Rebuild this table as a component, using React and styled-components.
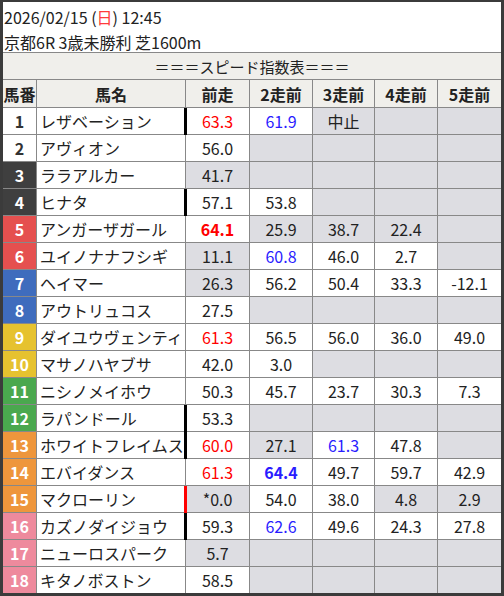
import React from "react";
import styled, { createGlobalStyle } from "styled-components";

const GlobalStyle = createGlobalStyle`
  * {
    box-sizing: border-box;
    padding: 0;
    margin: 0;
  }
  body {
    font-family: "Noto Sans CJK JP", "Noto Sans", sans-serif;
    background: #fff;
    color: #222;
  }
`;

const COLS = "34px 149px 64px 63px 62px 63px 63px";

const WAKU = {
  1: { bg: "#ffffff", fg: "#333333" },
  2: { bg: "#3f3f3f", fg: "#ffffff" },
  3: { bg: "#e5504f", fg: "#ffffff" },
  4: { bg: "#3f6cbd", fg: "#ffffff" },
  5: { bg: "#e6c22f", fg: "#ffffff" },
  6: { bg: "#4aa84e", fg: "#ffffff" },
  7: { bg: "#ee963c", fg: "#ffffff" },
  8: { bg: "#ee8a9d", fg: "#ffffff" },
};

const TEXT = { red: "#ff0000", blue: "#2a1cff" };

const Frame = styled.div`
  width: 504px;
  height: 596px;
  border: 3px solid #3b3b3b;
  border-top-width: 2px;
  background: #fff;
  overflow: hidden;
`;

const Info = styled.div`
  height: 51px;
  padding: 3px 0 0 1px;
  border-bottom: 1px solid #888;
  font-size: 16px;
  line-height: 25px;
  color: #222;
`;

const Sun = styled.span`
  color: #ff3b3b;
`;

const Title = styled.div`
  height: 27px;
  display: flex;
  align-items: center;
  justify-content: center;
  background: #f0efeb;
  border-bottom: 1px solid #888;
  font-size: 15px;
  color: #222;
`;

const Row = styled.div`
  display: grid;
  grid-template-columns: ${COLS};
  height: ${(p) => p.$h || 27}px;
`;

const Cell = styled.div`
  position: relative;
  display: flex;
  align-items: center;
  justify-content: center;
  border-right: 1px solid #888;
  border-bottom: ${(p) => (p.$last ? "none" : "1px solid #888")};
  font-size: 16px;
  &:last-child {
    border-right: none;
  }
`;

const HeadCell = styled(Cell)`
  background: #f0efeb;
  font-weight: 700;
  color: #222;
`;

const NumCell = styled(Cell)`
  background: ${(p) => p.$bg};
  color: ${(p) => p.$fg};
  font-weight: 700;
`;

const NameCell = styled(Cell)`
  justify-content: flex-start;
  padding-left: 3px;
  background: #fff;
  white-space: nowrap;
`;

const ValueCell = styled(Cell)`
  background: ${(p) => (p.$gray ? "#dddde2" : "#ffffff")};
  color: ${(p) => (p.$color ? TEXT[p.$color] : "#222")};
  font-weight: ${(p) => (p.$bold ? 700 : 400)};
  &::before {
    content: "";
    display: ${(p) => (p.$bar ? "block" : "none")};
    position: absolute;
    left: -2px;
    top: 0;
    bottom: -1px;
    width: 3px;
    background: ${(p) => (p.$bar === "red" ? "#ff0000" : "#000")};
  }
`;

const horses = [
  { no: 1, w: 1, name: "レザベーション", runs: [{ v: "63.3", c: "red", bar: "black" }, { v: "61.9", c: "blue" }, { v: "中止", g: 1 }, null, null] },
  { no: 2, w: 1, name: "アヴィオン", runs: [{ v: "56.0" }, null, null, null, null] },
  { no: 3, w: 2, name: "ララアルカー", runs: [{ v: "41.7", g: 1 }, null, null, null, null] },
  { no: 4, w: 2, name: "ヒナタ", runs: [{ v: "57.1", bar: "black" }, { v: "53.8" }, null, null, null] },
  { no: 5, w: 3, name: "アンガーザガール", runs: [{ v: "64.1", c: "red", b: 1 }, { v: "25.9", g: 1 }, { v: "38.7", g: 1 }, { v: "22.4", g: 1 }, null] },
  { no: 6, w: 3, name: "ユイノナナフシギ", runs: [{ v: "11.1", g: 1 }, { v: "60.8", c: "blue" }, { v: "46.0" }, { v: "2.7" }, null] },
  { no: 7, w: 4, name: "ヘイマー", runs: [{ v: "26.3", g: 1 }, { v: "56.2" }, { v: "50.4" }, { v: "33.3" }, { v: "-12.1" }] },
  { no: 8, w: 4, name: "アウトリュコス", runs: [{ v: "27.5" }, null, null, null, null] },
  { no: 9, w: 5, name: "ダイユウヴェンティ", runs: [{ v: "61.3", c: "red" }, { v: "56.5" }, { v: "56.0" }, { v: "36.0" }, { v: "49.0" }] },
  { no: 10, w: 5, name: "マサノハヤブサ", runs: [{ v: "42.0" }, { v: "3.0" }, null, null, null] },
  { no: 11, w: 6, name: "ニシノメイホウ", runs: [{ v: "50.3" }, { v: "45.7" }, { v: "23.7" }, { v: "30.3" }, { v: "7.3" }] },
  { no: 12, w: 6, name: "ラパンドール", runs: [{ v: "53.3", bar: "black" }, null, null, null, null] },
  { no: 13, w: 7, name: "ホワイトフレイムス", runs: [{ v: "60.0", c: "red", bar: "black" }, { v: "27.1", g: 1 }, { v: "61.3", c: "blue" }, { v: "47.8" }, null] },
  { no: 14, w: 7, name: "エバイダンス", runs: [{ v: "61.3", c: "red" }, { v: "64.4", c: "blue", b: 1 }, { v: "49.7" }, { v: "59.7" }, { v: "42.9" }] },
  { no: 15, w: 7, name: "マクローリン", runs: [{ v: "*0.0", g: 1, bar: "red" }, { v: "54.0" }, { v: "38.0" }, { v: "4.8", g: 1 }, { v: "2.9", g: 1 }] },
  { no: 16, w: 8, name: "カズノダイジョウ", runs: [{ v: "59.3", bar: "black" }, { v: "62.6", c: "blue" }, { v: "49.6" }, { v: "24.3" }, { v: "27.8" }] },
  { no: 17, w: 8, name: "ニューロスパーク", runs: [{ v: "5.7", g: 1 }, null, null, null, null] },
  { no: 18, w: 8, name: "キタノボストン", runs: [{ v: "58.5" }, null, null, null, null] },
];

const heads = ["馬番", "馬名", "前走", "2走前", "3走前", "4走前", "5走前"];

function App() {
  return (
    <>
      <GlobalStyle />
      <Frame>
        <Info>
          <div>
            2026/02/15 (<Sun>日</Sun>) 12:45
          </div>
          <div>京都6R 3歳未勝利 芝1600m</div>
        </Info>
        <Title>＝＝＝スピード指数表＝＝＝</Title>
        <Row $h={28}>
          {heads.map((h) => (
            <HeadCell key={h}>{h}</HeadCell>
          ))}
        </Row>
        {horses.map((h, i) => {
          const last = i === horses.length - 1;
          const waku = WAKU[h.w];
          return (
            <Row key={h.no} $h={last ? 26 : 27}>
              <NumCell $bg={waku.bg} $fg={waku.fg} $last={last}>
                {h.no}
              </NumCell>
              <NameCell $last={last}>{h.name}</NameCell>
              {h.runs.map((r, j) => (
                <ValueCell
                  key={j}
                  $last={last}
                  $gray={!r || r.g}
                  $color={r && r.c}
                  $bold={r && r.b}
                  $bar={r && r.bar}
                >
                  {r ? r.v : ""}
                </ValueCell>
              ))}
            </Row>
          );
        })}
      </Frame>
    </>
  );
}

export default App;
